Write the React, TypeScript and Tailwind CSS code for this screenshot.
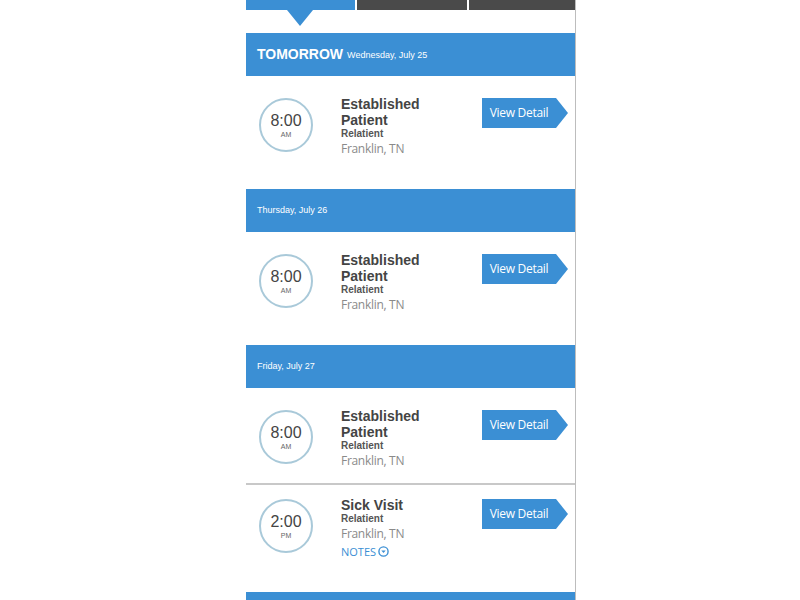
import React from 'react';

type Appt = {
  time: string;
  ampm: string;
  title: string[];
  notes?: boolean;
  h: string;
  pt: string;
};

type Day = {
  label?: string;
  date: string;
  appts: Appt[];
};

const days: Day[] = [
  {
    label: 'TOMORROW',
    date: 'Wednesday, July 25',
    appts: [{ time: '8:00', ampm: 'AM', title: ['Established', 'Patient'], h: 'h-[113px]', pt: 'pt-[22px]' }],
  },
  {
    date: 'Thursday, July 26',
    appts: [{ time: '8:00', ampm: 'AM', title: ['Established', 'Patient'], h: 'h-[113px]', pt: 'pt-[22px]' }],
  },
  {
    date: 'Friday, July 27',
    appts: [
      { time: '8:00', ampm: 'AM', title: ['Established', 'Patient'], h: 'h-[95px]', pt: 'pt-[22px]' },
      { time: '2:00', ampm: 'PM', title: ['Sick Visit'], notes: true, h: 'h-[109px]', pt: 'pt-[14px]' },
    ],
  },
];

function ViewDetail() {
  return (
    <div className="flex h-[30px] shrink-0">
      <div className="flex h-full w-[74px] items-center justify-center bg-[#3b8fd4] text-[12px] font-medium text-white [font-family:'Open_Sans',sans-serif] tracking-[-0.3px]">
        View Detail
      </div>
      <div className="h-0 w-0 border-y-[15px] border-l-[12px] border-y-transparent border-l-[#3b8fd4]" />
    </div>
  );
}

function ApptRow({ a, divider }: { a: Appt; divider: boolean }) {
  return (
    <div className={`flex ${a.h} ${a.pt} pl-[13px] ${divider ? 'border-t-2 border-[#c8c8c8]' : ''}`}>
      <div className="flex h-[54px] w-[54px] shrink-0 flex-col items-center justify-center rounded-full border-2 border-[#a9c9d9]">
        <div className="text-[16px] leading-[17px] text-[#444] [font-family:'Liberation_Sans',sans-serif]">{a.time}</div>
        <div className="mt-[2px] text-[7px] leading-[8px] text-[#666] [font-family:'Liberation_Sans',sans-serif]">{a.ampm}</div>
      </div>
      <div className="-mt-[2px] ml-[28px] w-[141px] [font-family:'Liberation_Sans',sans-serif]">
        {a.title.map((t) => (
          <div key={t} className="text-[14px] font-bold leading-[16px] text-[#444]">
            {t}
          </div>
        ))}
        <div className="text-[10px] font-bold leading-[12px] text-[#555]">Relatient</div>
        <div className="mt-[1px] text-[12px] leading-[15px] text-[#8a8a8a] [font-family:'Open_Sans',sans-serif] tracking-[-0.3px]">
          Franklin, TN
        </div>
        {a.notes && (
          <div className="mt-[4px] flex items-center gap-[2px] text-[11px] leading-[13px] text-[#3b8fd4] [font-family:'Open_Sans',sans-serif]">
            NOTES
            <svg width="11" height="11" viewBox="0 0 12 12">
              <circle cx="6" cy="6" r="5" fill="none" stroke="#3b8fd4" strokeWidth="1.5" />
              <path d="M3.6 5 L6 7.6 L8.4 5 Z" fill="#3b8fd4" />
            </svg>
          </div>
        )}
      </div>
      <ViewDetail />
    </div>
  );
}

export default function App() {
  return (
    <div className="h-[600px] w-[800px] overflow-hidden bg-white">
      <div className="ml-[246px] flex h-full w-[330px] flex-col border-r border-[#bdbdbd] bg-white">
        {/* tabs */}
        <div className="flex h-[10px] gap-[2px]">
          <div className="w-[109px] bg-[#3b8fd4]" />
          <div className="w-[110px] bg-[#4a4a4a]" />
          <div className="flex-1 bg-[#4a4a4a]" />
        </div>
        <div className="h-[23px]">
          <div className="ml-[41px] h-0 w-0 border-x-[13px] border-t-[16px] border-x-transparent border-t-[#3b8fd4]" />
        </div>

        {days.map((d) => (
          <div key={d.date}>
            <div className="flex h-[43px] items-center gap-[4px] bg-[#3b8fd4] pl-[11px] text-white [font-family:'Liberation_Sans',sans-serif]">
              {d.label && <span className="text-[14px] font-bold">{d.label}</span>}
              <span className={`text-[9px] ${d.label ? 'mt-[2px]' : ''}`}>{d.date}</span>
            </div>
            {d.appts.map((a, i) => (
              <ApptRow key={i} a={a} divider={i > 0} />
            ))}
          </div>
        ))}

        <div className="flex-1 bg-[#3b8fd4]" />
      </div>
    </div>
  );
}
